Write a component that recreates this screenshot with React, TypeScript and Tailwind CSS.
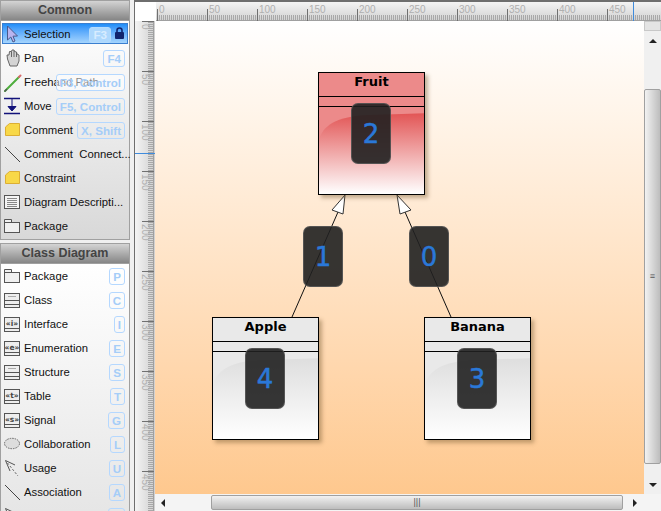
const sans = "font-['Liberation_Sans',Arial,sans-serif]";
const common = [
  { name: "Selection", key: "F3", icon: "cursor", active: true },
  { name: "Pan", key: "F4", icon: "hand" },
  { name: "Freehand Path", key: "F3, Control", icon: "pencil" },
  { name: "Move", key: "F5, Control", icon: "move" },
  { name: "Comment", key: "X, Shift", icon: "note" },
  { name: "Comment  Connect...", icon: "line" },
  { name: "Constraint", icon: "note" },
  { name: "Diagram Descripti...", icon: "desc" },
  { name: "Package", icon: "package" },
];
const classItems = [
  { name: "Package", key: "P", icon: "package" },
  { name: "Class", key: "C", icon: "class" },
  { name: "Interface", key: "I", icon: "i" },
  { name: "Enumeration", key: "E", icon: "e" },
  { name: "Structure", key: "S", icon: "class" },
  { name: "Table", key: "T", icon: "t" },
  { name: "Signal", key: "G", icon: "s" },
  { name: "Collaboration", key: "L", icon: "oval" },
  { name: "Usage", key: "U", icon: "usage" },
  { name: "Association", key: "A", icon: "line" },
  { name: "", key: "\u00a0", icon: "usage" },
];

function Icon({ kind }: { kind: string }) {
  const dark = "#555";
  let body: any = null;
  if (kind === "cursor") {
    body = <path d="M3.5 2 L3.5 16 L6.8 13 L9 18 L11 17 L9 12.2 L13.5 12 Z" fill="#b9b4ee" stroke="#4a5a8a" strokeWidth="1" />;
  } else if (kind === "hand") {
    body = <path d="M6 18 L3.5 11 L3 7 L5 7 L5.5 3.5 L7.5 3.5 L8 2 L10 2 L10.5 3.5 L12.5 4 L13 6 L15 7 L15 13 L13 18 Z M7.5 3.5 L7.5 9 M10 2.5 L10 9 M12.5 4 L12.5 9" fill="#d4d4d4" stroke="#666" strokeWidth="1" />;
  } else if (kind === "pencil") {
    body = <g fill="none" strokeLinecap="round"><path d="M1 19 L15 5" stroke="#4fae3e" strokeWidth="2" /><path d="M1 19 L2.5 17.5" stroke="#555" strokeWidth="1.4" /><path d="M15 5 L16.5 3.5" stroke="#d86a6a" strokeWidth="2" /></g>;
  } else if (kind === "move") {
    body = <g stroke="#12127a" fill="none"><path d="M0 2.5 H16 M0 17.5 H16" strokeWidth="1.5" /><path d="M8 2 V11" /><path d="M4 10.5 H12 L8 15 Z" fill="#12127a" /></g>;
  } else if (kind === "note") {
    body = <path d="M1.5 15.5 V7 L5.5 3.5 H15.5 V15.5 Z" fill="#f8d848" stroke="#dcae34" strokeWidth="1" />;
  } else if (kind === "line") {
    body = <path d="M1 3 L16 18" stroke="#444" strokeWidth="1" fill="none" />;
  } else if (kind === "desc") {
    body = <g fill="none" stroke={dark}><rect x="0.5" y="3.5" width="15" height="13" fill="#f4f4f4" /><path d="M3 6.5 H13 M3 8.5 H13 M3 10.5 H13 M3 12.5 H13 M3 14.5 H13" stroke="#888" /></g>;
  } else if (kind === "package") {
    body = <g fill="#f0f0f0" stroke={dark}><path d="M0.5 3.5 H7.5 V6.5 H0.5 Z" /><rect x="0.5" y="6.5" width="15" height="10" /></g>;
  } else if (kind === "class") {
    body = <g fill="#eee" stroke={dark}><rect x="0.5" y="3.5" width="15" height="14" /><path d="M0.5 10.5 H15.5 M0.5 14.5 H15.5" /><path d="M4 6.5 H12" stroke="#aaa" /></g>;
  } else if (kind === "oval") {
    body = <ellipse cx="8" cy="9.5" rx="7.5" ry="5.2" fill="#ddd" stroke="#666" strokeDasharray="1.5 1" />;
  } else if (kind === "usage") {
    body = <g fill="none" stroke="#555"><path d="M1.5 2.5 L6 13 M1.5 2.5 L11 7" /><path d="M3.5 5 L14 18" strokeDasharray="2 2" /></g>;
  } else {
    body = <g fill="#eee" stroke={dark}><rect x="0.5" y="3.5" width="15" height="14" /><path d="M0.5 14.5 H15.5" /><text x="8" y="11.5" textAnchor="middle" fontSize="7.5" fontWeight="700" stroke="none" fill="#444" fontFamily="DejaVu Sans">{`«${kind}»`}</text></g>;
  }
  return <svg width="20" height="20" viewBox="0 0 20 20" className="shrink-0">{body}</svg>;
}

function Row({ item }: { item: any }) {
  const overlap = item.key === "F3, Control";
  const blank = item.key === "\u00a0";
  return (
    <div className="relative flex h-6 items-center pl-[3px]">
      {item.active && <div className="absolute left-[1px] right-[1px] top-[1px] h-[21px] border border-[#3b7fd0] bg-gradient-to-b from-[#1e8ef8] to-[#a4d4fd]" />}
      <div className="relative flex items-center"><Icon kind={item.icon} /></div>
      <span className="relative top-[1px] whitespace-pre text-[11.3px] leading-none text-[#111]">{item.name}</span>
      {item.key && (
        <span className={`absolute flex items-center justify-center rounded-[3px] border border-[#b5d8ff] text-[11.6px] font-bold leading-none text-[#a5cdf8] ${item.active ? "right-[18px] top-[5px] h-[16px] border-[#b5dcfd] bg-[#aed8fd] px-[3px] text-[#d8ecff]" : "right-[4px] top-[4px] h-[17px] px-[3px]"} ${overlap ? "bg-white/50" : ""} ${blank ? "w-[17px]" : ""}`}>
          {item.key}
        </span>
      )}
      {item.active && (
        <svg className="absolute right-[4px] top-[5px]" width="11" height="12" viewBox="0 0 11 12">
          <path d="M3 5 V3.5 a2.5 2.5 0 0 1 5 0 V5" fill="none" stroke="#10246e" strokeWidth="1.6" />
          <rect x="1" y="5" width="9" height="7" rx="1" fill="#10246e" />
        </svg>
      )}
    </div>
  );
}

function Header({ title }: { title: string }) {
  return (
    <div className="flex h-[21px] shrink-0 items-center justify-center border border-[#a0a0a0] bg-gradient-to-b from-[#d4d4d4] to-[#868686] text-[12.5px] font-bold text-[#444]">
      {title}
    </div>
  );
}

function TopRuler() {
  const minor: number[] = [];
  for (let x = 1; x < 505; x += 2) minor.push(x);
  const major: number[] = [];
  for (let x = 0; x <= 450; x += 50) major.push(x);
  return (
    <svg width="505" height="19" className="block">
      <defs>
        <linearGradient id="rt" x1="0" x2="0" y1="0" y2="1"><stop offset="0" stopColor="#f4f4f4" /><stop offset="1" stopColor="#d0d0d0" /></linearGradient>
      </defs>
      <rect width="505" height="19" fill="url(#rt)" />
      {minor.map((x) => <rect key={x} x={x} y="13" width="1" height="5" fill="#a8a8a8" />)}
      <rect y="18" width="505" height="1" fill="#a0a0a0" />
      {major.map((v) => (
        <g key={v}>
          <rect x={v + 1} y="7" width="1" height="12" fill="#707070" />
          <text x={v + 3} y="11" fontSize="10" fill="#b0b0b0" fontFamily="Liberation Sans">{v}</text>
        </g>
      ))}
      <rect x="477" width="1" height="19" fill="#3f8bdc" />
    </svg>
  );
}

function LeftRuler() {
  const minor: number[] = [];
  for (let y = 1; y < 490; y += 2) minor.push(y);
  const major: number[] = [];
  for (let y = 0; y <= 450; y += 50) major.push(y);
  return (
    <svg width="20" height="490" className="block">
      <defs>
        <linearGradient id="rl" x1="0" x2="1" y1="0" y2="0"><stop offset="0" stopColor="#f4f4f4" /><stop offset="1" stopColor="#d0d0d0" /></linearGradient>
      </defs>
      <rect width="20" height="490" fill="url(#rl)" />
      {minor.map((y) => <rect key={y} x="13" y={y} width="5" height="1" fill="#a8a8a8" />)}
      <rect x="18" width="1" height="490" fill="#a0a0a0" />
      {major.map((v) => (
        <g key={v}>
          <rect x="7" y={v} width="12" height="1" fill="#707070" />
          {v > 0 && <text transform={`translate(7 ${v + 3}) rotate(90)`} fontSize="10" fill="#b0b0b0" fontFamily="Liberation Sans">{v}</text>}
        </g>
      ))}
      <text transform="translate(7 3) rotate(90)" fontSize="10" fill="#b0b0b0" fontFamily="Liberation Sans">0</text>
      <rect y="132" width="20" height="1" fill="#3f8bdc" />
    </svg>
  );
}

function Badge({ n, left, top }: { n: number; left: number; top: number }) {
  return (
    <div className="absolute flex h-[61px] w-[40px] items-center justify-center rounded-[7px] border border-[#6b6b6b]/60 bg-[#202020]/90 font-['DejaVu_Sans',sans-serif] text-[26px] leading-none text-[#2a78d8] [-webkit-text-stroke:0.5px_#2a78d8]" style={{ left, top }}>
      {n}
    </div>
  );
}

function ClassBox({ name, left, top, height, tint }: { name: string; left: number; top: number; height: number; tint: boolean }) {
  const body = tint ? "bg-[#ec8a8a]" : "bg-[#e9e9e9]";
  return (
    <div className="absolute box-border flex w-[107px] flex-col overflow-hidden border border-black shadow-[3px_3px_4px_rgba(120,90,50,0.45)]" style={{ left, top, height }}>
      <div className={`flex h-[23px] shrink-0 items-start justify-center font-['DejaVu_Sans',sans-serif] text-[13px] font-bold leading-[17px] text-black ${body}`}>{name}</div>
      <div className={`h-[11px] shrink-0 border-y border-black ${body}`} />
      <div className={`relative min-h-0 flex-1 ${body}`}>
        <svg className="absolute inset-0 h-full w-full" viewBox="0 0 105 85" preserveAspectRatio="none">
          <defs>
            <linearGradient id={`gl${name}`} x1="0" x2="0" y1="0" y2="1">
              <stop offset="0" stopColor={tint ? "#e25555" : "#dedede"} />
              <stop offset="1" stopColor="#ffffff" />
            </linearGradient>
          </defs>
          <path d="M0 33 C2 22 12 10 45 8 L105 6 V85 H0 Z" fill={`url(#gl${name})`} />
        </svg>
      </div>
    </div>
  );
}

function Thumb({ vertical }: { vertical: boolean }) {
  return <div className={`flex h-full w-full items-center justify-center rounded-[2px] border border-[#a0a0a0] ${vertical ? "bg-gradient-to-r from-[#f2f2f2] to-[#bdbdbd]" : "bg-gradient-to-b from-[#f2f2f2] to-[#bdbdbd]"} text-[9px] leading-none text-[#555]`}>{vertical ? "≡" : "|||"}</div>;
}

export default function App() {
  return (
    <div className={`flex h-[511px] w-[661px] overflow-hidden bg-[#f0f0f0] ${sans}`}>
      <aside className="flex w-[130px] shrink-0 flex-col">
        <Header title="Common" />
        <div className="h-[219px] shrink-0 border-x border-b border-[#a0a0a0] bg-gradient-to-b from-white to-[#d8d8d8] pt-[1px]">
          {common.map((it) => <Row key={it.name + it.icon} item={it} />)}
        </div>
        <div className="mt-[3px]"><Header title="Class Diagram" /></div>
        <div className="min-h-0 flex-1 overflow-hidden border-x border-[#a0a0a0] bg-gradient-to-b from-white to-[#e6e6e6]">
          {classItems.map((it) => <Row key={it.name + it.key} item={it} />)}
        </div>
      </aside>

      <main className="ml-[4px] flex min-w-0 flex-1 flex-col border-l-[1px] border-t-[2px] border-[#6e6e6e] bg-white">
        <div className="flex h-[19px] shrink-0">
          <div className="h-full w-[21px] shrink-0 bg-white" />
          <TopRuler />
        </div>
        <div className="flex min-h-0 flex-1">
          <div className="w-[20px] shrink-0 overflow-hidden"><LeftRuler /></div>
          <div className="flex min-w-0 flex-1 flex-col">
            <div className="flex min-h-0 flex-1">
              <div className="relative flex-1 overflow-hidden bg-gradient-to-b from-white to-[#fec88e]">
                <svg className="absolute inset-0" width="490" height="473">
                  <path d="M137 296 L183 191 M296 296 L250 191" stroke="#111" fill="none" />
                  <path d="M190 174 L177 189 L188 193 Z M242 174 L256 189 L245 193 Z" fill="#fff" stroke="#333" />
                </svg>
                <ClassBox name="Fruit" left={163} top={51} height={123} tint />
                <ClassBox name="Apple" left={57} top={296} height={123} tint={false} />
                <ClassBox name="Banana" left={269} top={296} height={123} tint={false} />
                <Badge n={2} left={196} top={82} />
                <Badge n={1} left={148} top={205} />
                <Badge n={0} left={254} top={205} />
                <Badge n={4} left={90} top={327} />
                <Badge n={3} left={302} top={327} />
              </div>
              <div className="flex w-[17px] shrink-0 flex-col bg-[#f0f0f0]">
                <div className="h-[10px] shrink-0 border border-[#c8c8c8] bg-[#e4e4e4]" />
                <div className="flex h-[58px] shrink-0 items-start justify-center pt-[8px]"><span className="h-0 w-0 border-x-[4px] border-b-[4px] border-x-transparent border-b-[#222]" /></div>
                <div className="h-[375px] shrink-0"><Thumb vertical /></div>
                <div className="flex flex-1 items-center justify-center pt-[12px]"><span className="h-0 w-0 border-x-[4px] border-t-[4px] border-x-transparent border-t-[#222]" /></div>
              </div>
            </div>
            <div className="flex h-[17px] shrink-0 bg-[#f4f4f4]">
              <div className="flex w-[16px] shrink-0 items-center justify-center"><span className="h-0 w-0 border-y-[4px] border-r-[4px] border-y-transparent border-r-[#222]" /></div>
              <div className="w-[40px] shrink-0" />
              <div className="mt-[1px] h-[15px] w-[412px] shrink-0"><Thumb vertical={false} /></div>
              <div className="flex w-[24px] shrink-0 items-center justify-center"><span className="h-0 w-0 border-y-[4px] border-l-[4px] border-y-transparent border-l-[#222]" /></div>
            </div>
          </div>
        </div>
      </main>
    </div>
  );
}
